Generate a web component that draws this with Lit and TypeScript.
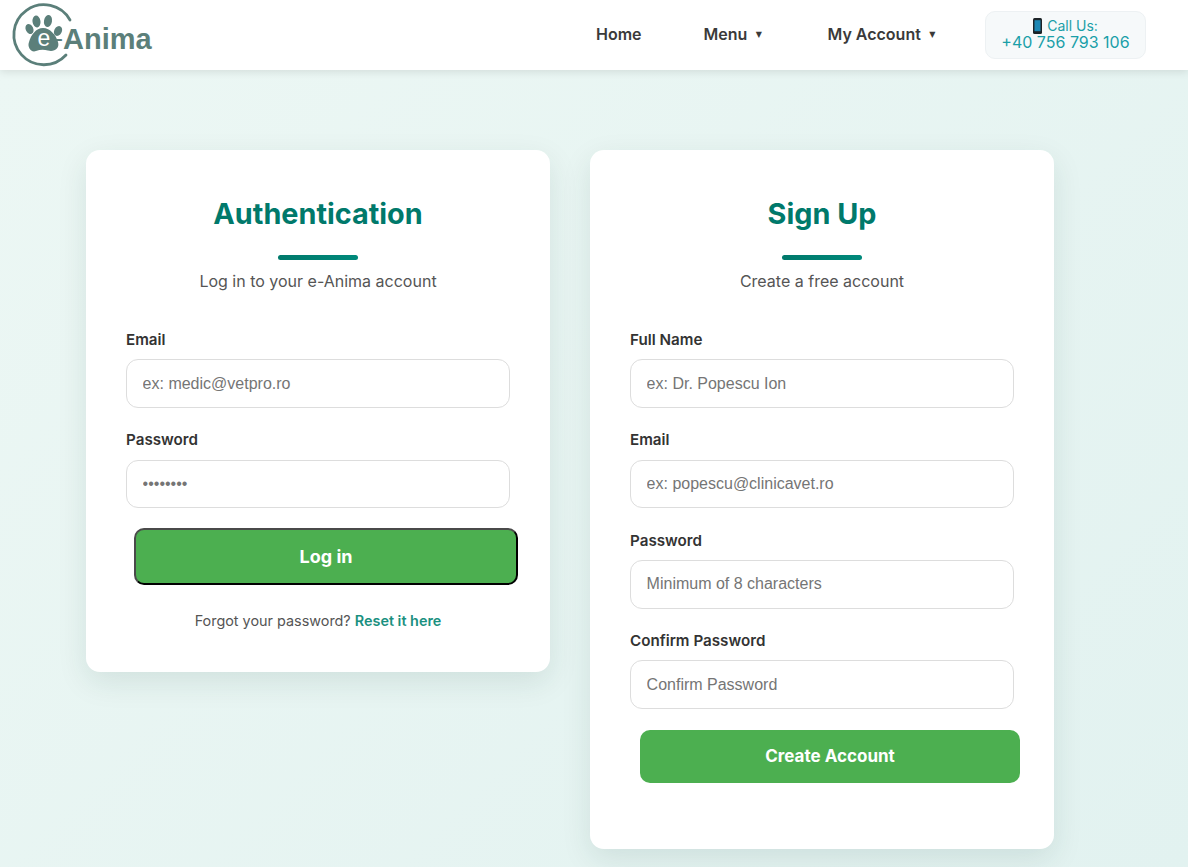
import { LitElement, html, css, svg } from 'lit'
import { customElement } from 'lit/decorators.js'

const logo = svg`
  <svg class="logo" width="160" height="70" viewBox="0 0 160 70" role="img" aria-label="e-Anima">
    <path d="M70 20 A30 30 0 1 0 66 55" fill="none" stroke="#5b7f7a" stroke-width="2.8" stroke-linecap="round" />
    <g fill="#5b7f7a">
      <ellipse cx="29.500" cy="29" rx="3.800" ry="5.200" transform="rotate(-25 29.500 29)" />
      <ellipse cx="36.500" cy="21.500" rx="4" ry="6" transform="rotate(-8 36.500 21.500)" />
      <ellipse cx="48" cy="21" rx="4" ry="6" transform="rotate(10 48 21)" />
      <ellipse cx="58" cy="31" rx="3.800" ry="5.200" transform="rotate(28 58 31)" />
      <path d="M43 28 C50 28 56 35 58 42 C60 49 54 52 48 50.500 C44 49.500 40 49.500 36 51 C31 53 27 47 29 42 C31 35 36 28 43 28 Z" />
    </g>
    <text x="37.500" y="46" font-family="Liberation Sans, sans-serif" font-size="23" fill="#fff">e</text>
    <text font-family="Liberation Sans, sans-serif" font-size="29" font-weight="700" fill="#5b7f7a"><tspan x="55" y="46" font-size="24" font-weight="400">-</tspan><tspan x="63" y="49">Anima</tspan></text>
  </svg>
`

const phoneIcon = svg`
  <svg class="phone" width="9" height="16" viewBox="0 0 9 16" aria-hidden="true">
    <rect x="0" y="0" width="9" height="16" rx="1.500" fill="#1d2428" />
    <rect x="1.500" y="2.200" width="6" height="11" fill="#1c87b4" />
  </svg>
`

@customElement('app-root')
export class AppRoot extends LitElement {
  static styles = css`
    :host {
      display: block;
      font-family: Inter, 'Liberation Sans', sans-serif;
      color: #333;
    }

    * {
      box-sizing: border-box;
    }

    .navbar {
      position: relative;
      z-index: 1;
      height: 70px;
      background: #fff;
      box-shadow: 0 2px 8px rgba(0, 0, 0, 0.1);
      display: flex;
      align-items: center;
      padding-right: 42px;
    }

    .logo {
      display: block;
      flex: none;
    }

    .nav-links {
      margin-left: auto;
      display: flex;
      align-items: center;
      font-size: 16px;
      font-weight: 600;
      color: #3a3a3a;
    }

    .nav-item {
      display: flex;
      align-items: center;
      white-space: nowrap;
      padding-bottom: 2px;
    }

    .nav-item.home {
      margin-right: 62px;
    }

    .nav-item.menu {
      margin-right: 65.5px;
    }

    .nav-item.account {
      margin-right: 49.5px;
    }

    .caret {
      font-family: 'DejaVu Sans', sans-serif;
      font-size: 8px;
      margin-left: 8.5px;
    }

    .call {
      width: 161px;
      height: 48px;
      padding-bottom: 3px;
      border: 1px solid #edf1f3;
      border-radius: 10px;
      background: #f6f9fa;
      color: #1a9fa8;
      display: flex;
      flex-direction: column;
      align-items: center;
      justify-content: center;
      font-weight: 400;
    }

    .call-label {
      display: flex;
      align-items: center;
      gap: 5px;
      font-size: 14px;
      line-height: 16px;
    }

    .call-number {
      font-size: 16px;
      line-height: 16px;
    }

    main {
      min-height: 797px;
      padding: 80px 86px 18px;
      background: linear-gradient(135deg, #ecf7f4, #e2f2f0);
      display: flex;
      align-items: flex-start;
      gap: 40px;
    }

    .card {
      width: 464px;
      padding: 40px;
      background: #fff;
      border-radius: 14px;
      box-shadow: 0 10px 30px rgba(0, 60, 50, 0.1);
    }

    h2 {
      margin: 0;
      font-size: 28.8px;
      line-height: 48px;
      font-weight: 700;
      text-align: center;
      color: #00796b;
    }

    .rule {
      width: 80px;
      height: 5px;
      margin: 17px auto 8.4px;
      border-radius: 3px;
      background: linear-gradient(90deg, #00796b, #00897b);
    }

    .subtitle {
      margin: 0 0 33.6px;
      font-size: 16px;
      line-height: 26px;
      text-align: center;
      color: #555;
    }

    .field {
      margin-bottom: 20.4px;
    }

    label {
      display: block;
      margin-bottom: 8px;
      font-size: 15.2px;
      line-height: 23.2px;
      font-weight: 600;
      color: #333;
    }

    input {
      display: block;
      width: 100%;
      height: 48.8px;
      padding: 0 15.6px;
      border: 1px solid #ddd;
      border-radius: 12px;
      background: #fff;
      font-family: 'Liberation Sans', Arial, sans-serif;
      font-size: 16px;
      color: #757575;
      outline: none;
    }

    input::placeholder {
      color: #757575;
      opacity: 1;
    }

    button {
      display: block;
      border-radius: 10px;
      background: #4caf50;
      color: #fff;
      font-family: Inter, 'Liberation Sans', sans-serif;
      font-weight: 700;
      cursor: pointer;
    }

    .login-btn {
      width: 384px;
      height: 57px;
      margin: -0.6px 0 0 8px;
      border: 2px solid;
      border-color: #4a4a4a #000 #000 #4a4a4a;
      font-size: 18px;
    }

    .signup-btn {
      width: 380px;
      height: 53px;
      margin: 0 0 26px 10px;
      border: none;
      font-size: 17px;
    }

    .footer {
      margin: 24.6px 0 0;
      font-size: 14.4px;
      line-height: 22.4px;
      text-align: center;
      color: #555;
    }

    .footer a {
      color: #1a9080;
      font-weight: 600;
      text-decoration: none;
    }
  `

  private field(label: string, type: string, placeholder: string, value = '') {
    return html`
      <div class="field">
        <label>${label}</label>
        <input type=${type} placeholder=${placeholder} .value=${value} />
      </div>
    `
  }

  render() {
    return html`
      <nav class="navbar">
        ${logo}
        <div class="nav-links">
          <span class="nav-item home">Home</span>
          <span class="nav-item menu">Menu<span class="caret">▼</span></span>
          <span class="nav-item account">My Account<span class="caret">▼</span></span>
          <div class="call">
            <span class="call-label">${phoneIcon}Call Us:</span>
            <span class="call-number">+40 756 793 106</span>
          </div>
        </div>
      </nav>
      <main>
        <section class="card">
          <h2>Authentication</h2>
          <div class="rule"></div>
          <p class="subtitle">Log in to your e-Anima account</p>
          ${this.field('Email', 'text', 'ex: medic@vetpro.ro')}
          ${this.field('Password', 'password', '', '12345678')}
          <button class="login-btn">Log in</button>
          <p class="footer">Forgot your password? <a href="#">Reset it here</a></p>
        </section>
        <section class="card">
          <h2>Sign Up</h2>
          <div class="rule"></div>
          <p class="subtitle">Create a free account</p>
          ${this.field('Full Name', 'text', 'ex: Dr. Popescu Ion')}
          ${this.field('Email', 'text', 'ex: popescu@clinicavet.ro')}
          ${this.field('Password', 'text', 'Minimum of 8 characters')}
          ${this.field('Confirm Password', 'text', 'Confirm Password')}
          <button class="signup-btn">Create Account</button>
        </section>
      </main>
    `
  }
}
